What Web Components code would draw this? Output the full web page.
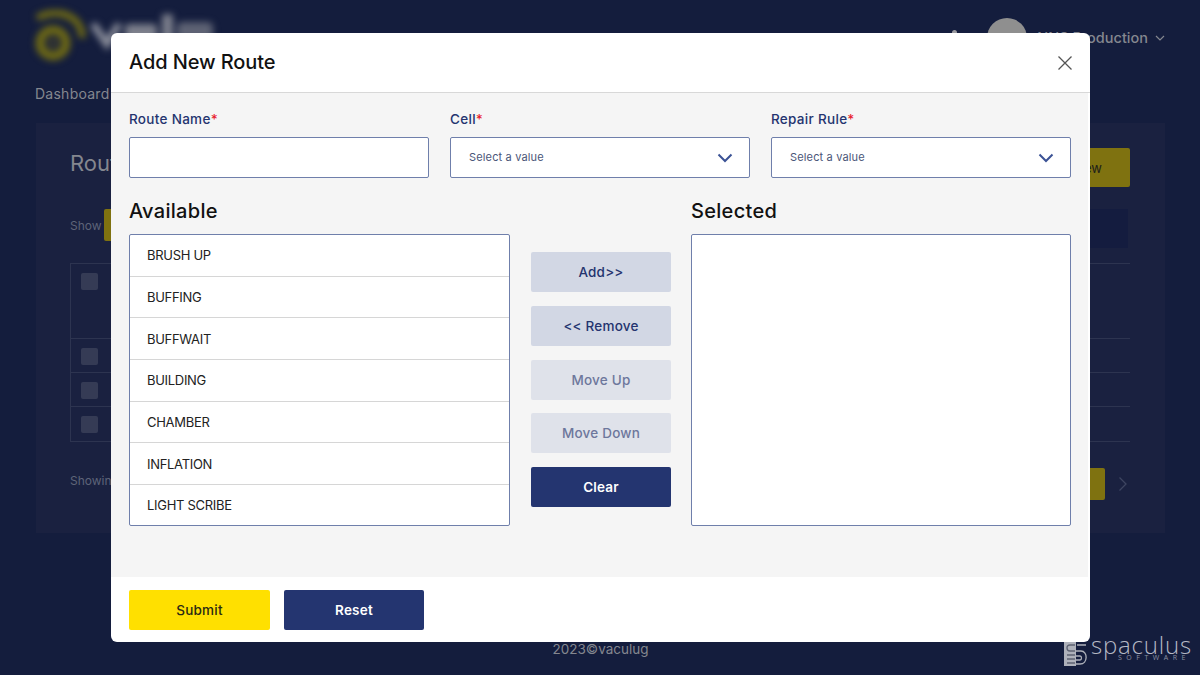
<!DOCTYPE html>
<html lang="en">
<head>
<meta charset="utf-8">
<title>Add New Route</title>
<style>
  html, body { margin: 0; height: 100%; background: #141d3d; overflow: hidden; }
  body { font-family: Inter, "Open Sans", sans-serif; }
</style>
</head>
<body>
<page-backdrop></page-backdrop>
<route-modal heading="Add New Route">
  <form-field slot="fields" label="Route Name"><text-box></text-box></form-field>
  <form-field slot="fields" label="Cell"><select-box placeholder="Select a value"></select-box></form-field>
  <form-field slot="fields" label="Repair Rule"><select-box placeholder="Select a value"></select-box></form-field>

  <list-box slot="available" heading="Available">
    <list-row>BRUSH UP</list-row>
    <list-row>BUFFING</list-row>
    <list-row>BUFFWAIT</list-row>
    <list-row>BUILDING</list-row>
    <list-row>CHAMBER</list-row>
    <list-row>INFLATION</list-row>
    <list-row>LIGHT SCRIBE</list-row>
  </list-box>

  <action-button slot="actions" kind="soft">Add&gt;&gt;</action-button>
  <action-button slot="actions" kind="soft">&lt;&lt; Remove</action-button>
  <action-button slot="actions" kind="muted">Move Up</action-button>
  <action-button slot="actions" kind="muted">Move Down</action-button>
  <action-button slot="actions" kind="navy">Clear</action-button>

  <list-box slot="selected" heading="Selected"></list-box>

  <action-button slot="footer" kind="yellow">Submit</action-button>
  <action-button slot="footer" kind="navy">Reset</action-button>
</route-modal>

<script>
// Pagina de fondo, oscurecida detras del modal
class PageBackdrop extends HTMLElement {
  constructor() {
    super();
    this.attachShadow({ mode: 'open' });
  }

  connectedCallback() {
    this.render();
  }

  render = () => {
    this.shadowRoot.innerHTML = `
      <style>
        :host { display: flex; flex-direction: column; height: 675px; box-sizing: border-box; padding: 0 35px 0 36px; background: #141d3d; color: #84878f; font-size: 14px; }
        .top { display: flex; align-items: center; height: 75px; }
        .logo { margin-left: -1px; filter: blur(3.500px); }
        .user { margin-left: auto; display: flex; align-items: center; margin-right: -4px; }
        .bell { width: 5px; height: 5px; margin: -10px 30px 0 0; border-radius: 50%; background: #9a9aa0; }
        .avatar { width: 40px; height: 40px; border-radius: 50%; background: #8f8f8f; margin-right: 10px; }
        .user-name { font-size: 14.500px; font-weight: 500; margin-top: -1px; }
        .user svg { margin: 0 4px 0 7px; }
        .nav { height: 48px; margin-left: -1px; padding-top: 10px; box-sizing: border-box; font-size: 14px; letter-spacing: .25px; }
        .card { height: 410px; box-sizing: border-box; padding: 25px 35px 0 34px; background: #1a2140; display: flex; flex-direction: column; }
        .title-row { display: flex; justify-content: space-between; height: 39px; }
        .title { font-size: 22px; line-height: 30px; }
        .yellow { background: #7f7210; border-radius: 2px; color: #20201a; }
        .new { width: 106px; height: 39px; display: flex; align-items: center; justify-content: flex-end; padding-right: 28px; box-sizing: border-box; font-size: 13px; }
        .tools { display: flex; justify-content: space-between; align-items: flex-start; height: 39px; margin-top: 22px; margin-right: 2px; }
        .show { display: flex; align-items: center; gap: 2px; font-size: 12px; color: #5e6478; }
        .pick { width: 40px; height: 32px; }
        .search { width: 200px; height: 39px; background: #141c3f; }
        .table { margin-top: 15px; border-top: 1px solid #2d3450; }
        .row { border-bottom: 1px solid #2d3450; border-left: 1px solid #2d3450; box-sizing: border-box; padding: 9px 0 0 10px; }
        .check { width: 17px; height: 17px; background: #353b55; border-radius: 2px; }
        .foot { display: flex; justify-content: space-between; align-items: flex-start; margin-top: 26px; height: 32px; font-size: 12px; line-height: 26px; color: #5e6478; }
        .pager { display: flex; align-items: center; gap: 13px; margin-right: 2px; }
        .page { width: 40px; height: 32px; }
        .copy { text-align: center; margin-top: 108px; font-size: 13.500px; color: #84878f; }
      </style>
      <div class="top">
        <div class="logo">
          <svg width="182" height="52" viewBox="0 0 182 52" fill="none">
            <circle cx="18" cy="33" r="13" stroke="#6f6a14" stroke-width="9"/>
            <circle cx="18" cy="33" r="5" fill="#3a3a30"/>
            <path d="M2 8C25-4 48 8 47 28" stroke="#6f6a14" stroke-width="7"/>
            <path d="M58 14L72 34 84 14" stroke="#8d909c" stroke-width="7"/>
            <g fill="#7d808c">
              <rect x="90" y="14" width="32" height="18" rx="4"/>
              <rect x="127" y="4" width="11" height="28" rx="3"/>
              <rect x="142" y="12" width="36" height="18" rx="5" opacity=".7"/>
            </g>
          </svg>
        </div>
        <div class="user">
          <div class="bell"></div>
          <div class="avatar"></div>
          <span class="user-name">NNS Production</span>
          <svg width="10" height="6" viewBox="0 0 10 6" fill="none"><path d="M1 1l4 4 4-4" stroke="#84878f" stroke-width="1.200"/></svg>
        </div>
      </div>
      <div class="nav">Dashboard</div>
      <div class="card">
        <div class="title-row"><span class="title">Routes</span><span class="yellow new">New</span></div>
        <div class="tools"><div class="show">Show <span class="yellow pick"></span></div><div class="search"></div></div>
        <div class="table">
          <div class="row" style="height:75px"><div class="check"></div></div>
          <div class="row" style="height:34px"><div class="check"></div></div>
          <div class="row" style="height:34px"><div class="check"></div></div>
          <div class="row" style="height:35px"><div class="check"></div></div>
        </div>
        <div class="foot">
          <span>Showing</span>
          <div class="pager"><span class="yellow page"></span>
            <svg width="10" height="16" viewBox="0 0 10 16" fill="none"><path d="M1.500 1.500L8 8l-6.500 6.500" stroke="#3d4460" stroke-width="1.300"/></svg>
          </div>
        </div>
      </div>
      <div class="copy">2023©vaculug</div>
      <spaculus-mark></spaculus-mark>
    `;
  }
}

// Marca de agua de la esquina inferior derecha
class SpaculusMark extends HTMLElement {
  constructor() {
    super();
    this.attachShadow({ mode: 'open' });
    this.shadowRoot.innerHTML = `
      <style>
        :host { position: absolute; left: 1064px; top: 636px; display: flex; gap: 3px; color: #b4b8c4; font-family: "Open Sans", sans-serif; }
        svg { margin-top: 6px; }
        .word { font-size: 24px; line-height: 18px; letter-spacing: .8px; font-weight: 300; }
        .sub { font-size: 7px; line-height: 8px; letter-spacing: 4.500px; margin-left: 27px; white-space: nowrap; color: #8d92a2; }
      </style>
      <svg width="24" height="24" viewBox="0 0 24 24" fill="none">
        <rect width="12" height="24" fill="#aeb1ba"/>
        <path d="M11 3H6C2 3 2 9 6 9h5M3 13h8M3 17h8M3 21h8" stroke="#5d6272" stroke-width="1.300"/>
        <path d="M13 3h9M12 9h5c7 0 7 13-1 13h-4M12 14h4c2 0 2 4 0 4h-4" stroke="#aeb1ba" stroke-width="1.300"/>
      </svg>
      <div><div class="word">spaculus</div><div class="sub">SOFTWARE</div></div>
    `;
  }
}

// Modal principal con cabecera, cuerpo y pie
class RouteModal extends HTMLElement {
  constructor() {
    super();
    this.attachShadow({ mode: 'open' });
  }

  connectedCallback() {
    this.shadowRoot.innerHTML = `
      <style>
        :host { position: absolute; left: 111px; top: 33px; width: 979px; height: 609px; display: flex; flex-direction: column; background: #fff; border-radius: 6px; overflow: hidden; color: #111; }
        header { height: 60px; flex: none; box-sizing: border-box; padding: 0 18px; display: flex; align-items: center; justify-content: space-between; border-bottom: 1px solid #d8d8d8; }
        h2 { margin: -2px 0 0; font-size: 20px; font-weight: 500; letter-spacing: -.1px; color: #111; }
        .body { flex: 1; background: #f5f5f5; padding: 17px 17px 0 18px; box-sizing: border-box; margin-right: 2px; }
        .fields { display: grid; grid-template-columns: 300px 300px 300px; column-gap: 21px; }
        .columns { display: grid; grid-template-columns: 381px 181px 380px; margin-top: 20px; }
        .actions { display: flex; flex-direction: column; gap: 13.750px; padding: 54px 20px 0 21px; }
        footer { height: 65px; flex: none; box-sizing: border-box; padding: 13px 18px 0; display: flex; gap: 14px; align-items: flex-start; }
        footer ::slotted(action-button) { width: 141px; }
        footer ::slotted(action-button:last-child) { width: 140px; }
      </style>
      <header>
        <h2>${this.getAttribute('heading')}</h2>
        <svg width="16" height="16" viewBox="0 0 16 16" fill="none" style="margin-right:-1px"><path d="M1.500 1.500l13 13M14.500 1.500l-13 13" stroke="#555" stroke-width="1.300"/></svg>
      </header>
      <div class="body">
        <div class="fields"><slot name="fields"></slot></div>
        <div class="columns">
          <slot name="available"></slot>
          <div class="actions"><slot name="actions"></slot></div>
          <slot name="selected"></slot>
        </div>
      </div>
      <footer><slot name="footer"></slot></footer>
    `;
  }
}

// Campo con etiqueta y asterisco de obligatorio
class FormField extends HTMLElement {
  constructor() {
    super();
    this.attachShadow({ mode: 'open' });
  }

  connectedCallback() {
    this.shadowRoot.innerHTML = `
      <style>
        :host { display: flex; flex-direction: column; gap: 9px; }
        label { font-size: 13.500px; line-height: 18px; font-weight: 500; letter-spacing: .3px; color: #24346f; }
        b { color: #e8202e; font-weight: 500; }
      </style>
      <label>${this.getAttribute('label')}<b>*</b></label>
      <slot></slot>
    `;
  }
}

class TextBox extends HTMLElement {
  constructor() {
    super();
    this.attachShadow({ mode: 'open' });
    this.shadowRoot.innerHTML = `
      <style>
        :host { display: block; height: 41px; box-sizing: border-box; background: #fff; border: 1px solid #6f7fab; border-radius: 2px; }
      </style>
    `;
  }
}

class SelectBox extends HTMLElement {
  constructor() {
    super();
    this.attachShadow({ mode: 'open' });
  }

  connectedCallback() {
    this.shadowRoot.innerHTML = `
      <style>
        :host { display: flex; align-items: center; justify-content: space-between; height: 41px; box-sizing: border-box; padding: 0 16px 0 18px; background: #fff; border: 1px solid #6f7fab; border-radius: 2px; font-size: 11px; color: #4a5578; letter-spacing: .15px; }
        span { margin-top: -2px; }
      </style>
      <span>${this.getAttribute('placeholder')}</span>
      <svg width="16" height="10" viewBox="0 0 16 10" fill="none"><path d="M1.500 1.500L8 8l6.500-6.500" stroke="#3b5295" stroke-width="2"/></svg>
    `;
  }
}

// Titulo y caja de lista (Available / Selected)
class ListBox extends HTMLElement {
  constructor() {
    super();
    this.attachShadow({ mode: 'open' });
  }

  connectedCallback() {
    this.shadowRoot.innerHTML = `
      <style>
        :host { display: flex; flex-direction: column; gap: 10px; }
        h3 { margin: 0; font-size: 20px; line-height: 26px; font-weight: 500; letter-spacing: .3px; color: #111; }
        .box { height: 292px; box-sizing: border-box; background: #fff; border: 1px solid #6f7fab; border-radius: 2px; overflow: hidden; }
      </style>
      <h3>${this.getAttribute('heading')}</h3>
      <div class="box"><slot></slot></div>
    `;
  }
}

class ListRow extends HTMLElement {
  constructor() {
    super();
    this.attachShadow({ mode: 'open' });
    this.shadowRoot.innerHTML = `
      <style>
        :host { display: flex; align-items: center; height: 41.700px; box-sizing: border-box; padding-left: 17px; border-bottom: 1px solid #d6d6d6; font-size: 13px; color: #222; letter-spacing: -.3px; }
      </style>
      <slot></slot>
    `;
  }
}

// Boton con variantes de color
class ActionButton extends HTMLElement {
  constructor() {
    super();
    this.attachShadow({ mode: 'open' });
    this.shadowRoot.innerHTML = `
      <style>
        :host { display: flex; align-items: center; justify-content: center; height: 40px; border-radius: 2px; font-size: 13.500px; font-weight: 500; letter-spacing: .2px; white-space: nowrap; }
        :host([kind="soft"]) { background: #d2d7e4; color: #24346f; }
        :host([kind="muted"]) { background: #dfe2ea; color: #6d779c; }
        :host([kind="navy"]) { background: #243570; color: #fff; font-weight: 600; }
        :host([kind="yellow"]) { background: #ffe000; color: #2a2a14; }
      </style>
      <slot></slot>
    `;
  }
}

customElements.define('page-backdrop', PageBackdrop);
customElements.define('spaculus-mark', SpaculusMark);
customElements.define('route-modal', RouteModal);
customElements.define('form-field', FormField);
customElements.define('text-box', TextBox);
customElements.define('select-box', SelectBox);
customElements.define('list-box', ListBox);
customElements.define('list-row', ListRow);
customElements.define('action-button', ActionButton);
</script>
</body>
</html>
